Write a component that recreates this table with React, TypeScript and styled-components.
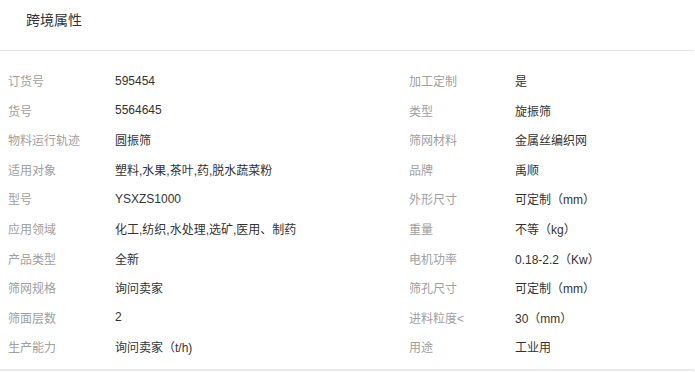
import React from 'react';
import styled, { createGlobalStyle } from 'styled-components';

interface Attr {
  label: string;
  value: string;
}

const GlobalStyle = createGlobalStyle`
  body {
    margin: 0;
    background: #fff;
    font-family: "Liberation Sans", Arial, "Noto Sans CJK SC", sans-serif;
  }
`;

const Panel = styled.section`
  width: 694px;
  background: #fff;
  border-bottom: 2px solid #ebebeb;
`;

const Title = styled.div`
  height: 51px;
  box-sizing: border-box;
  padding: 11px 0 0 26px;
  font-size: 14px;
  line-height: 18px;
  color: #333;
  border-bottom: 1px solid #e6e6e6;
`;

const Grid = styled.div`
  display: grid;
  grid-template-columns: 107px 294px 106px 1fr;
  grid-auto-rows: 29.56px;
  align-items: center;
  padding: 15px 0 8px 8px;
  font-size: 12px;
`;

const Label = styled.div`
  color: #a0a0a0;
  white-space: nowrap;
`;

const Value = styled.div`
  color: #333;
  white-space: nowrap;
`;

const left: Attr[] = [
  { label: '订货号', value: '595454' },
  { label: '货号', value: '5564645' },
  { label: '物料运行轨迹', value: '圆振筛' },
  { label: '适用对象', value: '塑料,水果,茶叶,药,脱水蔬菜粉' },
  { label: '型号', value: 'YSXZS1000' },
  { label: '应用领域', value: '化工,纺织,水处理,选矿,医用、制药' },
  { label: '产品类型', value: '全新' },
  { label: '筛网规格', value: '询问卖家' },
  { label: '筛面层数', value: '2' },
  { label: '生产能力', value: '询问卖家（t/h)' },
];

const right: Attr[] = [
  { label: '加工定制', value: '是' },
  { label: '类型', value: '旋振筛' },
  { label: '筛网材料', value: '金属丝编织网' },
  { label: '品牌', value: '禹顺' },
  { label: '外形尺寸', value: '可定制（mm）' },
  { label: '重量', value: '不等（kg）' },
  { label: '电机功率', value: '0.18-2.2（Kw）' },
  { label: '筛孔尺寸', value: '可定制（mm）' },
  { label: '进料粒度<', value: '30（mm）' },
  { label: '用途', value: '工业用' },
];

const App: React.FC = () => (
  <>
    <GlobalStyle />
    <Panel>
      <Title>跨境属性</Title>
      <Grid>
        {left.map((l, i) => (
          <React.Fragment key={l.label}>
            <Label>{l.label}</Label>
            <Value>{l.value}</Value>
            <Label>{right[i].label}</Label>
            <Value>{right[i].value}</Value>
          </React.Fragment>
        ))}
      </Grid>
    </Panel>
  </>
);

export default App;
